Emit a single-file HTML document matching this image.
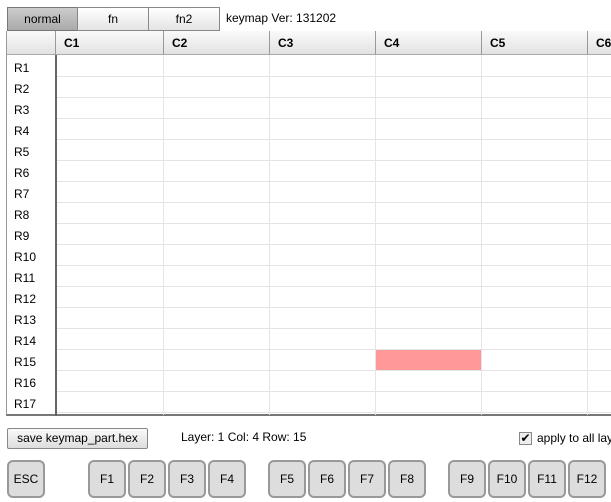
<!DOCTYPE html><html><head><style>
body{margin:0;width:611px;height:502px;overflow:hidden;background:#fff;font-family:"Liberation Sans",Arial,sans-serif;font-size:12px;color:#000;position:relative}
.a{position:absolute}
.tab{top:7px;height:22px;border:1px solid #888;background:linear-gradient(#fff,#e4e4e4);text-align:center;line-height:22px;box-sizing:border-box;height:24px}
.hdr{top:31px;height:24px;background:linear-gradient(#fafafa,#e2e2e2);border-right:1px solid #999;border-bottom:1px solid #aaa;box-sizing:border-box;font-weight:bold;line-height:24px;padding-left:8px}
.rl{left:14px;line-height:21px}
.hl{left:57px;right:0;height:1px;background:#e4e4e4}
.vl{top:55px;height:360px;width:1px;background:#e4e4e4}
.key{top:460px;width:38px;height:38px;border:2px solid #999;border-radius:6px;background:#ddd;box-sizing:border-box;text-align:center;line-height:34px}
</style></head><body>
<div class="a tab" style="left:7px;width:71px;background:linear-gradient(#ccc,#aaa);border-color:#777">normal</div>
<div class="a tab" style="left:77px;width:72px">fn</div>
<div class="a tab" style="left:148px;width:72px">fn2</div>
<div class="a" style="left:226px;top:11px">keymap Ver: 131202</div>
<div class="a" style="left:6px;top:31px;width:605px;height:385px;border-left:1px solid #999;border-top:1px solid #999;border-bottom:2px solid #777;box-sizing:border-box"></div>
<div class="a hdr" style="left:7px;width:49px"></div>
<div class="a hdr" style="left:56px;width:108px">C1</div>
<div class="a hdr" style="left:164px;width:106px">C2</div>
<div class="a hdr" style="left:270px;width:106px">C3</div>
<div class="a hdr" style="left:376px;width:106px">C4</div>
<div class="a hdr" style="left:482px;width:106px">C5</div>
<div class="a hdr" style="left:588px;width:40px">C6</div>
<div class="a" style="left:376px;top:349px;width:105px;height:21px;background:#ff9999"></div>
<div class="a vl" style="left:163px"></div><div class="a vl" style="left:269px"></div><div class="a vl" style="left:375px"></div><div class="a vl" style="left:481px"></div><div class="a vl" style="left:587px"></div>
<div class="a hl" style="top:76px"></div><div class="a hl" style="top:97px"></div><div class="a hl" style="top:118px"></div><div class="a hl" style="top:139px"></div><div class="a hl" style="top:160px"></div><div class="a hl" style="top:181px"></div><div class="a hl" style="top:202px"></div><div class="a hl" style="top:223px"></div><div class="a hl" style="top:244px"></div><div class="a hl" style="top:265px"></div><div class="a hl" style="top:286px"></div><div class="a hl" style="top:307px"></div><div class="a hl" style="top:328px"></div><div class="a hl" style="top:349px"></div><div class="a hl" style="top:370px"></div><div class="a hl" style="top:391px"></div><div class="a hl" style="top:412px"></div>
<div class="a" style="left:55px;top:55px;width:2px;height:361px;background:#666"></div>
<div class="a rl" style="top:58px">R1</div><div class="a rl" style="top:79px">R2</div><div class="a rl" style="top:100px">R3</div><div class="a rl" style="top:121px">R4</div><div class="a rl" style="top:142px">R5</div><div class="a rl" style="top:163px">R6</div><div class="a rl" style="top:184px">R7</div><div class="a rl" style="top:205px">R8</div><div class="a rl" style="top:226px">R9</div><div class="a rl" style="top:247px">R10</div><div class="a rl" style="top:268px">R11</div><div class="a rl" style="top:289px">R12</div><div class="a rl" style="top:310px">R13</div><div class="a rl" style="top:331px">R14</div><div class="a rl" style="top:352px">R15</div><div class="a rl" style="top:373px">R16</div><div class="a rl" style="top:394px">R17</div>
<div class="a" style="left:7px;top:428px;width:141px;height:21px;border:1px solid #888;border-radius:2px;background:linear-gradient(#fafafa,#ddd);box-sizing:border-box;text-align:center;line-height:19px">save keymap_part.hex</div>
<div class="a" style="left:181px;top:430px">Layer: 1 Col: 4 Row: 15</div>
<div class="a" style="left:519px;top:432px;width:13px;height:13px;border:1px solid #888;background:#eee;box-sizing:border-box;font-size:12px;line-height:11px;text-align:center">✔</div>
<div class="a" style="left:537px;top:431px;white-space:nowrap">apply to all layers</div>
<div class="a key" style="left:7px">ESC</div>
<div class="a key" style="left:88px">F1</div><div class="a key" style="left:128px">F2</div><div class="a key" style="left:168px">F3</div><div class="a key" style="left:208px">F4</div>
<div class="a key" style="left:268px">F5</div><div class="a key" style="left:308px">F6</div><div class="a key" style="left:348px">F7</div><div class="a key" style="left:388px">F8</div>
<div class="a key" style="left:448px">F9</div><div class="a key" style="left:488px">F10</div><div class="a key" style="left:528px">F11</div><div class="a key" style="left:568px">F12</div>
</body></html>
